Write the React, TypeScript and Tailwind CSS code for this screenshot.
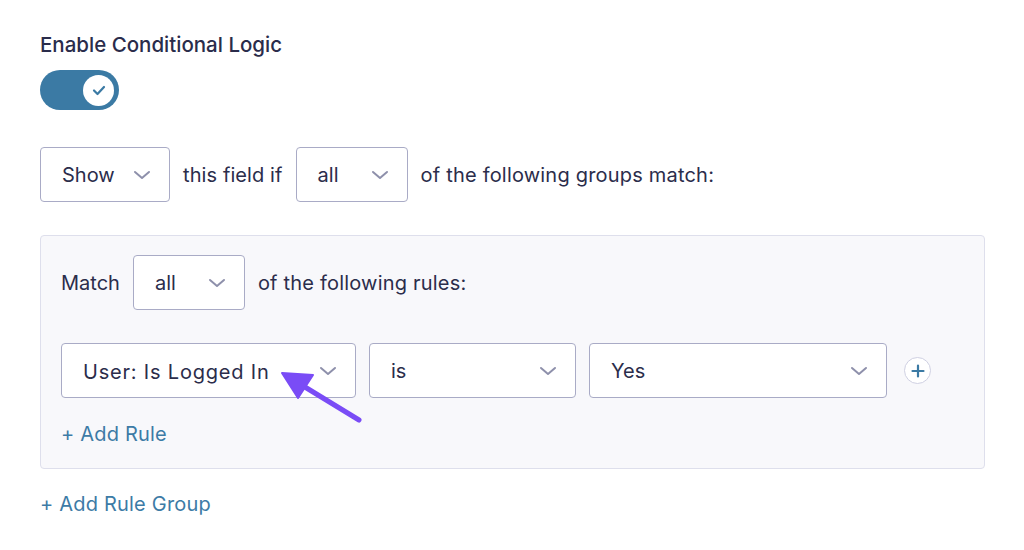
import React from "react";

const Chevron = () => (
  <svg width="18" height="10" viewBox="0 0 18 10" fill="none" className="shrink-0">
    <path d="M2 2 L9 8 L16 2" stroke="#8e90ab" strokeWidth="2" strokeLinecap="round" strokeLinejoin="round" />
  </svg>
);

function Select({ label, className = "", textClass = "" }: { label: string; className?: string; textClass?: string }) {
  return (
    <div
      className={`h-[55px] bg-white border-[1.5px] border-[#a9abc6] rounded-[4px] flex items-center justify-between pl-[21px] pr-[18px] ${className}`}
    >
      <span className={`text-[#2b2d4b] ${textClass || "text-[20px]"}`}>{label}</span>
      <Chevron />
    </div>
  );
}

export default function App() {
  return (
    <div
      className="w-[1024px] h-[550px] bg-white pl-[40px] pr-[39px] pt-[33px] relative overflow-hidden"
      style={{ fontFamily: "Inter, 'Noto Sans', sans-serif" }}
    >
      <h3 className="text-[20.5px] leading-[24px] font-medium text-[#2a2c4b]">Enable Conditional Logic</h3>

      <div className="mt-[13px] w-[79px] h-[40px] rounded-full bg-[#3b7aa4] flex items-center justify-end pr-[5px]">
        <div className="w-[31px] h-[31px] rounded-full bg-white flex items-center justify-center">
          <svg width="14" height="11" viewBox="0 0 14 11" fill="none">
            <path d="M2 5.5 L5.5 9 L12 2" stroke="#3b7aa4" strokeWidth="2.2" strokeLinecap="round" strokeLinejoin="round" />
          </svg>
        </div>
      </div>

      <div className="mt-[37px] flex items-center">
        <Select label="Show" className="w-[130px]" />
        <span className="ml-[13px] text-[20px] tracking-[0.1px] text-[#2b2d4b]">this field if</span>
        <Select label="all" className="w-[112px] ml-[13px]" />
        <span className="ml-[13px] text-[20px] tracking-[0.2px] text-[#2b2d4b]">of the following groups match:</span>
      </div>

      <div className="mt-[33px] h-[234px] bg-[#f8f8fb] border border-[#dedfec] rounded-[4px] pl-[20px] pt-[19px]">
        <div className="flex items-center">
          <span className="text-[20px] text-[#2b2d4b]">Match</span>
          <Select label="all" className="w-[112px] ml-[13px]" />
          <span className="ml-[13px] text-[20px] tracking-[0.2px] text-[#2b2d4b]">of the following rules:</span>
        </div>

        <div className="mt-[33px] flex items-center">
          <Select
            label="User: Is Logged In"
            className="w-[295px] pl-[20px]"
            textClass="text-[20px] tracking-[0.8px] translate-y-[1px]"
          />
          <Select label="is" className="w-[207px] ml-[13px]" />
          <Select label="Yes" className="w-[298px] ml-[13px]" />
          <div className="ml-[17px] w-[27px] h-[27px] rounded-full bg-white border-[1.5px] border-[#cfd0e2] flex items-center justify-center">
            <svg width="14" height="14" viewBox="0 0 14 14" fill="none">
              <path d="M7 1.5 V12.5 M1.5 7 H12.5" stroke="#3b7aa4" strokeWidth="2.2" strokeLinecap="round" />
            </svg>
          </div>
        </div>

        <div className="mt-[21px] text-[20px] tracking-[0.2px] text-[#3d7ba6]">+ Add Rule</div>
      </div>

      <div className="mt-[20px] text-[20px] tracking-[0.2px] text-[#3d7ba6]">+ Add Rule Group</div>

      <svg className="absolute left-0 top-0 pointer-events-none" width="1024" height="550" viewBox="0 0 1024 550">
        <path d="M359 420 L300 384" stroke="#7a4cf6" strokeWidth="5" strokeLinecap="round" />
        <path d="M282 373 L313 375 L298 398 Z" fill="#7a4cf6" stroke="#7a4cf6" strokeWidth="2" strokeLinejoin="round" />
      </svg>
    </div>
  );
}
